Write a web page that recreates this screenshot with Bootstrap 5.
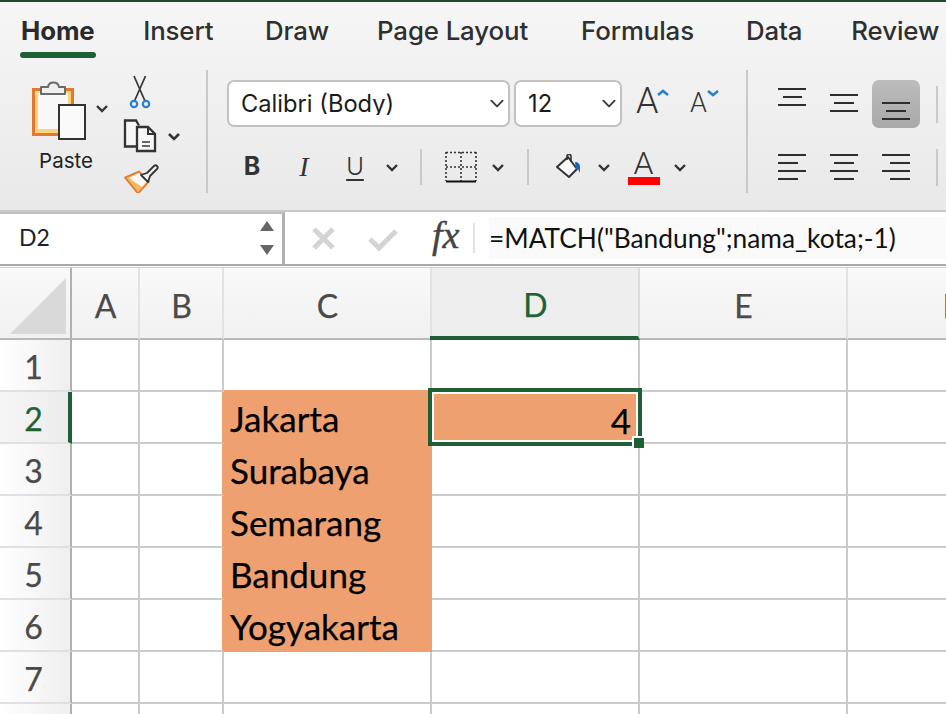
<!doctype html>
<html lang="en">
<head>
<meta charset="utf-8">
<title>Excel</title>
<link href="https://cdn.jsdelivr.net/npm/bootstrap@5.3.0/dist/css/bootstrap.min.css" rel="stylesheet">
<style>
html,body{margin:0;height:714px;overflow:hidden;background:#fff}
body{font-family:"Inter","Liberation Sans",sans-serif;color:#2b2b2b}
.app-frame{width:946px;height:714px;overflow:hidden;display:flex;flex-direction:column}
.top-stripe{height:2px;background:#1d4d2e;flex:none}
.ribbon-area{height:208px;flex:none;background:linear-gradient(#f6f6f6,#e9e9e9);overflow:hidden}
.tab-strip{height:60px;padding:14px 0 0 21px;flex-wrap:nowrap}
.tab-strip .nav-link{padding:0;font-size:25.8px;line-height:30px;color:#2f2f2f;font-weight:500;letter-spacing:-.1px;position:relative;white-space:nowrap}
.tab-strip .nav-item:nth-child(1) .nav-link{margin-right:48.6px}
.tab-strip .nav-item:nth-child(2) .nav-link{margin-right:51.5px}
.tab-strip .nav-item:nth-child(3) .nav-link{margin-right:48px}
.tab-strip .nav-item:nth-child(4) .nav-link{margin-right:53px}
.tab-strip .nav-item:nth-child(5) .nav-link{margin-right:52px}
.tab-strip .nav-item:nth-child(6) .nav-link{margin-right:49px}
.tab-strip .nav-link.active{font-weight:700;color:#2a2a2a}
.tab-strip .nav-link.active::after{content:"";position:absolute;left:-1px;right:-1px;top:36px;height:6px;border-radius:3px;background:#1f5f36}
.tool-row{height:123px;margin-top:8px}
.group-clip{width:208px;flex:none;padding:0 0 0 30px;border-right:2px solid #c9c9c9}
.paste-col{width:92px;padding-top:6px}
.paste-label{font-size:20.5px;line-height:22px;margin-top:8px;width:72px;text-align:center;color:#222}
.group-font{width:540px;flex:none;padding:10px 0 0 19px;border-right:2px solid #c9c9c9}
.face-select{height:47px;padding:0 0 0 12px;font-size:23.7px;line-height:1;border:2px solid #c2c2c2;border-radius:7px;background-color:#fff;color:#1c1c1c;background-position:right 1px center;background-size:20px 15px;box-shadow:none;font-family:"Inter","Liberation Sans",sans-serif}
.face-wide{width:283px}
.face-size{width:108px;margin-left:4px}
.grow-a{display:flex;align-items:flex-start;color:#333;font-family:"Roboto",sans-serif;font-weight:300;line-height:1}
.grow-big{margin-left:14px;width:54px;font-size:36px;padding-top:3px}
.grow-big svg{margin:6px 0 0 -2px}
.grow-small{width:40px;font-size:27px;padding-top:10px}
.grow-small svg{margin-top:-1px}
.fmt-row{display:grid;grid-template-columns:50px 54px 48px 26px 32px 48px 26px 33px 50px 20px 59px 14px;height:44px;margin-top:18px;align-items:center;justify-items:center;color:#333}
.fmt-b{font-size:25px;font-weight:700}
.fmt-i{font-family:"Liberation Serif",serif;font-style:italic;font-size:28px}
.fmt-u{font-size:24px;font-weight:300;text-decoration:underline;text-underline-offset:4px;text-decoration-thickness:1.5px}
.fmt-sep{width:2px;height:36px;background:#c9c9c9}
.fmt-color{display:flex;flex-direction:column;align-items:center;line-height:1;font-family:"Roboto",sans-serif;font-size:32px;font-weight:300;margin-top:-3px}
.fmt-color i{display:block;width:32px;height:8px;background:#f00;margin-top:-2px}
.group-align{padding:10px 0 0 20px;display:grid;grid-template-columns:48px 48px 48px 16px;grid-auto-rows:48px;column-gap:4px;row-gap:15px;align-content:start}
.al-btn{width:48px;height:48px;padding:0;border:0;border-radius:7px;background:transparent;display:block}
.al-btn.active,.al-btn.active:hover{background:linear-gradient(#bcbcbc,#a9a9a9)}
.al-tick{width:2px;height:37px;background:#c9c9c9;align-self:center;margin-left:12px}
.formula-row{height:56px;flex:none;background:#fff;border-top:2px solid #c9c9c9;border-bottom:2px solid #a9a9a9}
.name-box{width:285px;flex:none;padding:0 7px 3px 19px;border-top:2px solid #bfbfbf;border-right:3px solid #b0b0b0;font-family:"Lato",sans-serif;font-size:23px;color:#222}
.fx-mark{font-family:"Liberation Serif",serif;font-style:italic;font-size:38px;color:#444;line-height:1;width:55px;padding:0 0 6px 14px;margin-left:18px;flex:none;-webkit-text-stroke:.4px #444}
.fx-sep{width:2px;height:30px;background:#e2e2e2;flex:none}
.formula-text{flex:1;margin:6px 0 6px 14px;padding-top:2px;background:#fafafa;font-family:"Lato",sans-serif;font-size:26.3px;color:#111;white-space:nowrap;display:flex;align-items:center}
.grid-clip{flex:1;overflow:hidden;border-top:1px solid #d0d0d0;margin-top:1px}
.sheet-grid.table{width:1056px;table-layout:fixed;border-collapse:separate;border-spacing:0;margin:0;font-family:"Lato",sans-serif}
.sheet-grid.table>*>*>*{padding:0;height:52px;background:#fff;border-style:solid;border-width:0 2px 2px 0;border-color:#cbcbcb;box-shadow:none;color:#000;font-size:35px;line-height:48px;vertical-align:bottom;-webkit-text-stroke:.25px currentColor}
.sheet-grid.table>thead>*>*{height:72px;background:linear-gradient(#f9f9f9,#f1f1f1);border-right-color:#e2e2e2;border-bottom-color:#b9b9b9;color:#4a4a4a;text-align:center;font-size:32px;font-weight:400;vertical-align:middle;padding:6px 0 0 1px}
.sheet-grid.table>thead>*>.corner-cell{border-right-color:#b0b0b0;padding:0;vertical-align:top}
.corner-tri{display:block;margin:10px 0 0 10px}
.sheet-grid.table>tbody>*>th{background:linear-gradient(90deg,#fff,#efefef);border-right-color:#b0b0b0;border-bottom-color:#e0e0e0;color:#4a4a4a;text-align:center;font-weight:400;font-size:32px;line-height:46px;vertical-align:middle;padding:4px 3px 0 0}
.sheet-grid.table>thead>*>.col-on{background:#eee;color:#1f6236;border-right-color:#dcdcdc;border-bottom:4px solid #1f5f36;position:relative}
.col-on::after{content:"";position:absolute;left:-2px;bottom:-4px;width:2px;height:4px;background:#1f5f36}
.sheet-grid.table>tbody>*>.row-on{color:#1f6236;border-right:4px solid #1f5f36;background:linear-gradient(90deg,#f6f6f6,#ececec);padding-right:1px}
.sheet-grid.table>tbody>*>.above-fill{border-bottom-color:#efa071}
.sheet-grid.table>tbody>*>.left-fill{border-right-color:#efa071}
.sheet-grid.table>tbody>*>.city-fill{background:#efa071;border-color:#efa071;padding-left:6px;white-space:nowrap}
.sheet-grid.table>tbody>*>.pick-cell{position:relative;background:#efa071}
.pick-box{position:absolute;inset:-4px;border:4px solid #1f5f36;box-shadow:inset 0 0 0 2px #fff;background:#efa071;text-align:right;padding:6px 7px 0 0;line-height:44px;color:#000}
.pick-handle{position:absolute;right:-6px;bottom:-6px;width:10px;height:10px;background:#1f5f36;box-shadow:-2px -2px 0 #fff}
</style>
</head>
<body>
<div class="app-frame">
  <div class="top-stripe"></div>
  <div class="ribbon-area">
    <ul class="nav tab-strip">
      <li class="nav-item"><a class="nav-link active" href="#">Home</a></li>
      <li class="nav-item"><a class="nav-link" href="#">Insert</a></li>
      <li class="nav-item"><a class="nav-link" href="#">Draw</a></li>
      <li class="nav-item"><a class="nav-link" href="#">Page Layout</a></li>
      <li class="nav-item"><a class="nav-link" href="#">Formulas</a></li>
      <li class="nav-item"><a class="nav-link" href="#">Data</a></li>
      <li class="nav-item"><a class="nav-link" href="#">Review</a></li>
    </ul>
    <div class="d-flex tool-row">
      <div class="group-clip d-flex">
        <div class="paste-col">
          <svg width="80" height="66" viewBox="30 76 80 66" fill="none" aria-hidden="true">
            <rect x="33.5" y="89.5" width="39" height="45" fill="#f8d57e" stroke="#e8772e" stroke-width="3"/>
            <rect x="38" y="93" width="30" height="36" fill="#f8f8f8"/>
            <path d="M41 94v-7h7c1-6 10-6 11 0h6v7z" fill="#efefef" stroke="#6a6a6a" stroke-width="2" stroke-linejoin="round"/>
            <rect x="59" y="105" width="26" height="34" fill="#fafafa" stroke="#333" stroke-width="2"/>
            <path d="M97 106l5 5 5-5" stroke="#333" stroke-width="2.4"/>
          </svg>
          <div class="paste-label">Paste</div>
        </div>
        <svg width="62" height="123" viewBox="122 70 62 123" fill="none" aria-hidden="true">
          <path d="M134 76l11 25M145.500 76l-11 25" stroke="#3a3a3a" stroke-width="1.8"/>
          <circle cx="134" cy="104" r="3.2" stroke="#2a7fd0" stroke-width="2.2"/>
          <circle cx="146" cy="104" r="3.2" stroke="#2a7fd0" stroke-width="2.2"/>
          <path d="M136 146.500h-11v-26h11l3 5" stroke="#333" stroke-width="2.3" fill="#f6f6f6"/>
          <path d="M137 127h11l7 7v17h-18z" stroke="#333" stroke-width="2.3" fill="#f8f8f8"/>
          <path d="M148 127v7h7" stroke="#333" stroke-width="2"/>
          <path d="M142 142h8M142 146h8" stroke="#666" stroke-width="1.8"/>
          <path d="M169 134l5 5 5-5" stroke="#333" stroke-width="2.6"/>
          <path d="M125 177.500l14-6 10 10-11 12z" fill="#f4b860" stroke="#e8772e" stroke-width="1.8" stroke-linejoin="round"/>
          <path d="M129 178l10-5 8 8-5 6z" fill="#fbfbfb"/>
          <path d="M141 175l6-2 7-7c1-1 2-1 3 0s1 2 0 3l-7 7-2 6z" fill="#f4f4f4" stroke="#333" stroke-width="1.8" stroke-linejoin="round"/>
        </svg>
      </div>
      <div class="group-font">
        <div class="d-flex">
          <select class="form-select face-select face-wide" aria-label="Font"><option>Calibri (Body)</option></select>
          <select class="form-select face-select face-size" aria-label="Size"><option>12</option></select>
          <div class="grow-a grow-big">A<svg width="12" height="8" viewBox="0 0 12 8" fill="none"><path d="M1 6l5-4 5 4" stroke="#2a7fd0" stroke-width="2.6"/></svg></div>
          <div class="grow-a grow-small">A<svg width="12" height="8" viewBox="0 0 12 8" fill="none"><path d="M1 2l5 4 5-4" stroke="#2a7fd0" stroke-width="2.6"/></svg></div>
        </div>
        <div class="fmt-row">
          <span class="fmt-b">B</span>
          <span class="fmt-i">I</span>
          <span class="fmt-u">U</span>
          <svg width="14" height="9" viewBox="0 0 14 9" fill="none"><path d="M2 2l5 5 5-5" stroke="#333" stroke-width="2.4"/></svg>
          <span class="fmt-sep"></span>
          <svg width="32" height="32" viewBox="0 0 32 32" fill="none">
            <path d="M1 1.500h30M1 16h30M1 1v29M16 1v29M31 1v29" stroke="#333" stroke-width="1.600" stroke-dasharray="2 2"/>
            <path d="M1 30.500h30" stroke="#111" stroke-width="2"/>
          </svg>
          <svg width="14" height="9" viewBox="0 0 14 9" fill="none"><path d="M2 2l5 5 5-5" stroke="#333" stroke-width="2.4"/></svg>
          <span class="fmt-sep"></span>
          <svg width="28" height="26" viewBox="0 0 28 26" fill="none">
            <path d="M2 13L13 3l9 12-8 8z" fill="#fafafa" stroke="#333" stroke-width="2" stroke-linejoin="round"/>
            <path d="M12 6V2c0-2 4-2 4 0v6" stroke="#333" stroke-width="1.600"/>
            <path d="M20 8c3 0 5 2 5 5v6l-2-4-2 1z" fill="#1d62b5"/>
          </svg>
          <svg width="14" height="9" viewBox="0 0 14 9" fill="none"><path d="M2 2l5 5 5-5" stroke="#333" stroke-width="2.4"/></svg>
          <span class="fmt-color">A<i></i></span>
          <svg width="14" height="9" viewBox="0 0 14 9" fill="none"><path d="M2 2l5 5 5-5" stroke="#333" stroke-width="2.4"/></svg>
        </div>
      </div>
      <div class="group-align">
        <button class="btn al-btn" aria-label="Align top"><svg width="48" height="48" viewBox="0 0 48 48" stroke="#2d2d2d" stroke-width="2"><path d="M10 9h28M15 17h19M10 25h28"/></svg></button>
        <button class="btn al-btn" aria-label="Align middle"><svg width="48" height="48" viewBox="0 0 48 48" stroke="#2d2d2d" stroke-width="2"><path d="M10 15h28M14 23h20M10 31h28"/></svg></button>
        <button class="btn al-btn active" aria-label="Align bottom"><svg width="48" height="48" viewBox="0 0 48 48" stroke="#2d2d2d" stroke-width="2"><path d="M10 23h28M14 31h20M10 39h28"/></svg></button>
        <span class="al-tick"></span>
        <button class="btn al-btn" aria-label="Align left"><svg width="48" height="48" viewBox="0 0 48 48" stroke="#2d2d2d" stroke-width="2"><path d="M10 12h28M10 20h20M10 28h28M10 36h20"/></svg></button>
        <button class="btn al-btn" aria-label="Align center"><svg width="48" height="48" viewBox="0 0 48 48" stroke="#2d2d2d" stroke-width="2"><path d="M10 12h28M14 20h20M10 28h28M14 36h20"/></svg></button>
        <button class="btn al-btn" aria-label="Align right"><svg width="48" height="48" viewBox="0 0 48 48" stroke="#2d2d2d" stroke-width="2"><path d="M10 12h28M18 20h20M10 28h28M18 36h20"/></svg></button>
        <span class="al-tick"></span>
      </div>
    </div>
  </div>
  <div class="d-flex align-items-center formula-row">
    <div class="name-box d-flex align-items-center justify-content-between align-self-stretch">
      <span>D2</span>
      <svg width="16" height="36" viewBox="0 0 16 36"><path d="M8 1l7 10H1zM8 35l7-10H1z" fill="#666"/></svg>
    </div>
    <svg width="115" height="52" viewBox="286 212 115 52" fill="none" aria-hidden="true">
      <path d="M315 229l19 19M334 229l-19 19" stroke="#d4d4d4" stroke-width="5"/>
      <path d="M371 239l9 9 17-17" stroke="#d4d4d4" stroke-width="5"/>
    </svg>
    <span class="fx-mark">fx</span>
    <span class="fx-sep"></span>
    <div class="formula-text">=MATCH("Bandung";nama_kota;-1)</div>
  </div>
  <div class="grid-clip">
    <table class="table sheet-grid">
      <colgroup><col width="72"><col width="68"><col width="84"><col width="208"><col width="208"><col width="208"><col width="208"></colgroup>
      <thead>
        <tr>
          <th class="corner-cell"><svg class="corner-tri" width="56" height="56" viewBox="0 0 56 56"><path d="M56 0v56H0z" fill="#d9d9d9"/></svg></th>
          <th>A</th><th>B</th><th>C</th><th class="col-on">D</th><th>E</th><th>F</th>
        </tr>
      </thead>
      <tbody>
        <tr><th>1</th><td></td><td></td><td class="above-fill"></td><td></td><td></td><td></td></tr>
        <tr><th class="row-on">2</th><td></td><td class="left-fill"></td><td class="city-fill">Jakarta</td><td class="pick-cell"><div class="pick-box">4<span class="pick-handle"></span></div></td><td></td><td></td></tr>
        <tr><th>3</th><td></td><td class="left-fill"></td><td class="city-fill">Surabaya</td><td></td><td></td><td></td></tr>
        <tr><th>4</th><td></td><td class="left-fill"></td><td class="city-fill">Semarang</td><td></td><td></td><td></td></tr>
        <tr><th>5</th><td></td><td class="left-fill"></td><td class="city-fill">Bandung</td><td></td><td></td><td></td></tr>
        <tr><th>6</th><td></td><td class="left-fill"></td><td class="city-fill">Yogyakarta</td><td></td><td></td><td></td></tr>
        <tr><th>7</th><td></td><td></td><td></td><td></td><td></td><td></td></tr>
        <tr><th></th><td></td><td></td><td></td><td></td><td></td><td></td></tr>
      </tbody>
    </table>
  </div>
</div>
</body>
</html>
